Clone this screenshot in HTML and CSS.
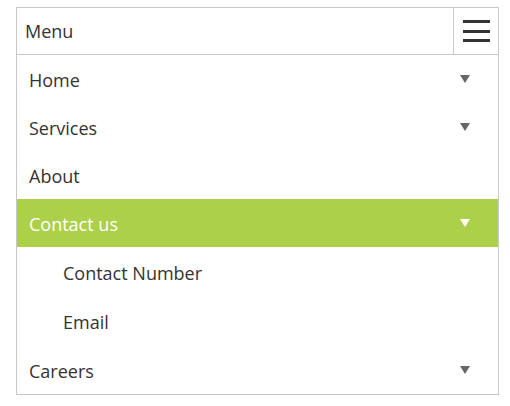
FILE: index.html
```html
<!DOCTYPE html>
<html>
<head>
<meta charset="utf-8">
<link rel="stylesheet" href="styles.css">
</head>
<body>
<div class="menu">
  <div class="header">
    <span class="title">Menu</span>
    <div class="toggle">
      <span class="bar"></span><span class="bar"></span><span class="bar"></span>
    </div>
  </div>
  <ul class="items">
    <li class="item"><span>Home</span><span class="caret"></span></li>
    <li class="item"><span>Services</span><span class="caret"></span></li>
    <li class="item"><span>About</span></li>
    <li class="item active"><span>Contact us</span><span class="caret"></span></li>
    <li class="item sub"><span>Contact Number</span></li>
    <li class="item sub"><span>Email</span></li>
    <li class="item last"><span>Careers</span><span class="caret"></span></li>
  </ul>
</div>
</body>
</html>
```
FILE: styles.css
```css
html, body { margin: 0; padding: 0; background: #fff; }
body { padding: 7px 0 0 16px; font-family: "Open Sans", "Noto Sans", sans-serif; color: #333; }
.menu { width: 483px; box-sizing: border-box; border: 1px solid #c8c8c8; }
.header { display: flex; height: 46px; border-bottom: 1px solid #c8c8c8; }
.title { flex: 1; display: flex; align-items: center; padding-left: 8px; font-size: 18px; }
.toggle { width: 44px; border-left: 1px solid #c8c8c8; display: flex; flex-direction: column; align-items: center; justify-content: center; gap: 6.5px; }
.bar { display: block; width: 27px; height: 3px; background: #333; }
.items { list-style: none; margin: 0; padding: 0; }
.item { box-sizing: border-box; display: flex; align-items: center; justify-content: space-between; height: 48px; padding: 2px 28px 0 12px; font-size: 18px; }
.item.sub { padding-left: 46px; height: 49px; }
.item.last { height: 49px; }
.item.active { background: #add04a; color: #fff; }
.caret { width: 0; height: 0; margin-top: -2px; border-left: 5.5px solid transparent; border-right: 5.5px solid transparent; border-top: 8px solid #666; }
.active .caret { border-top-color: #fff; }
```
